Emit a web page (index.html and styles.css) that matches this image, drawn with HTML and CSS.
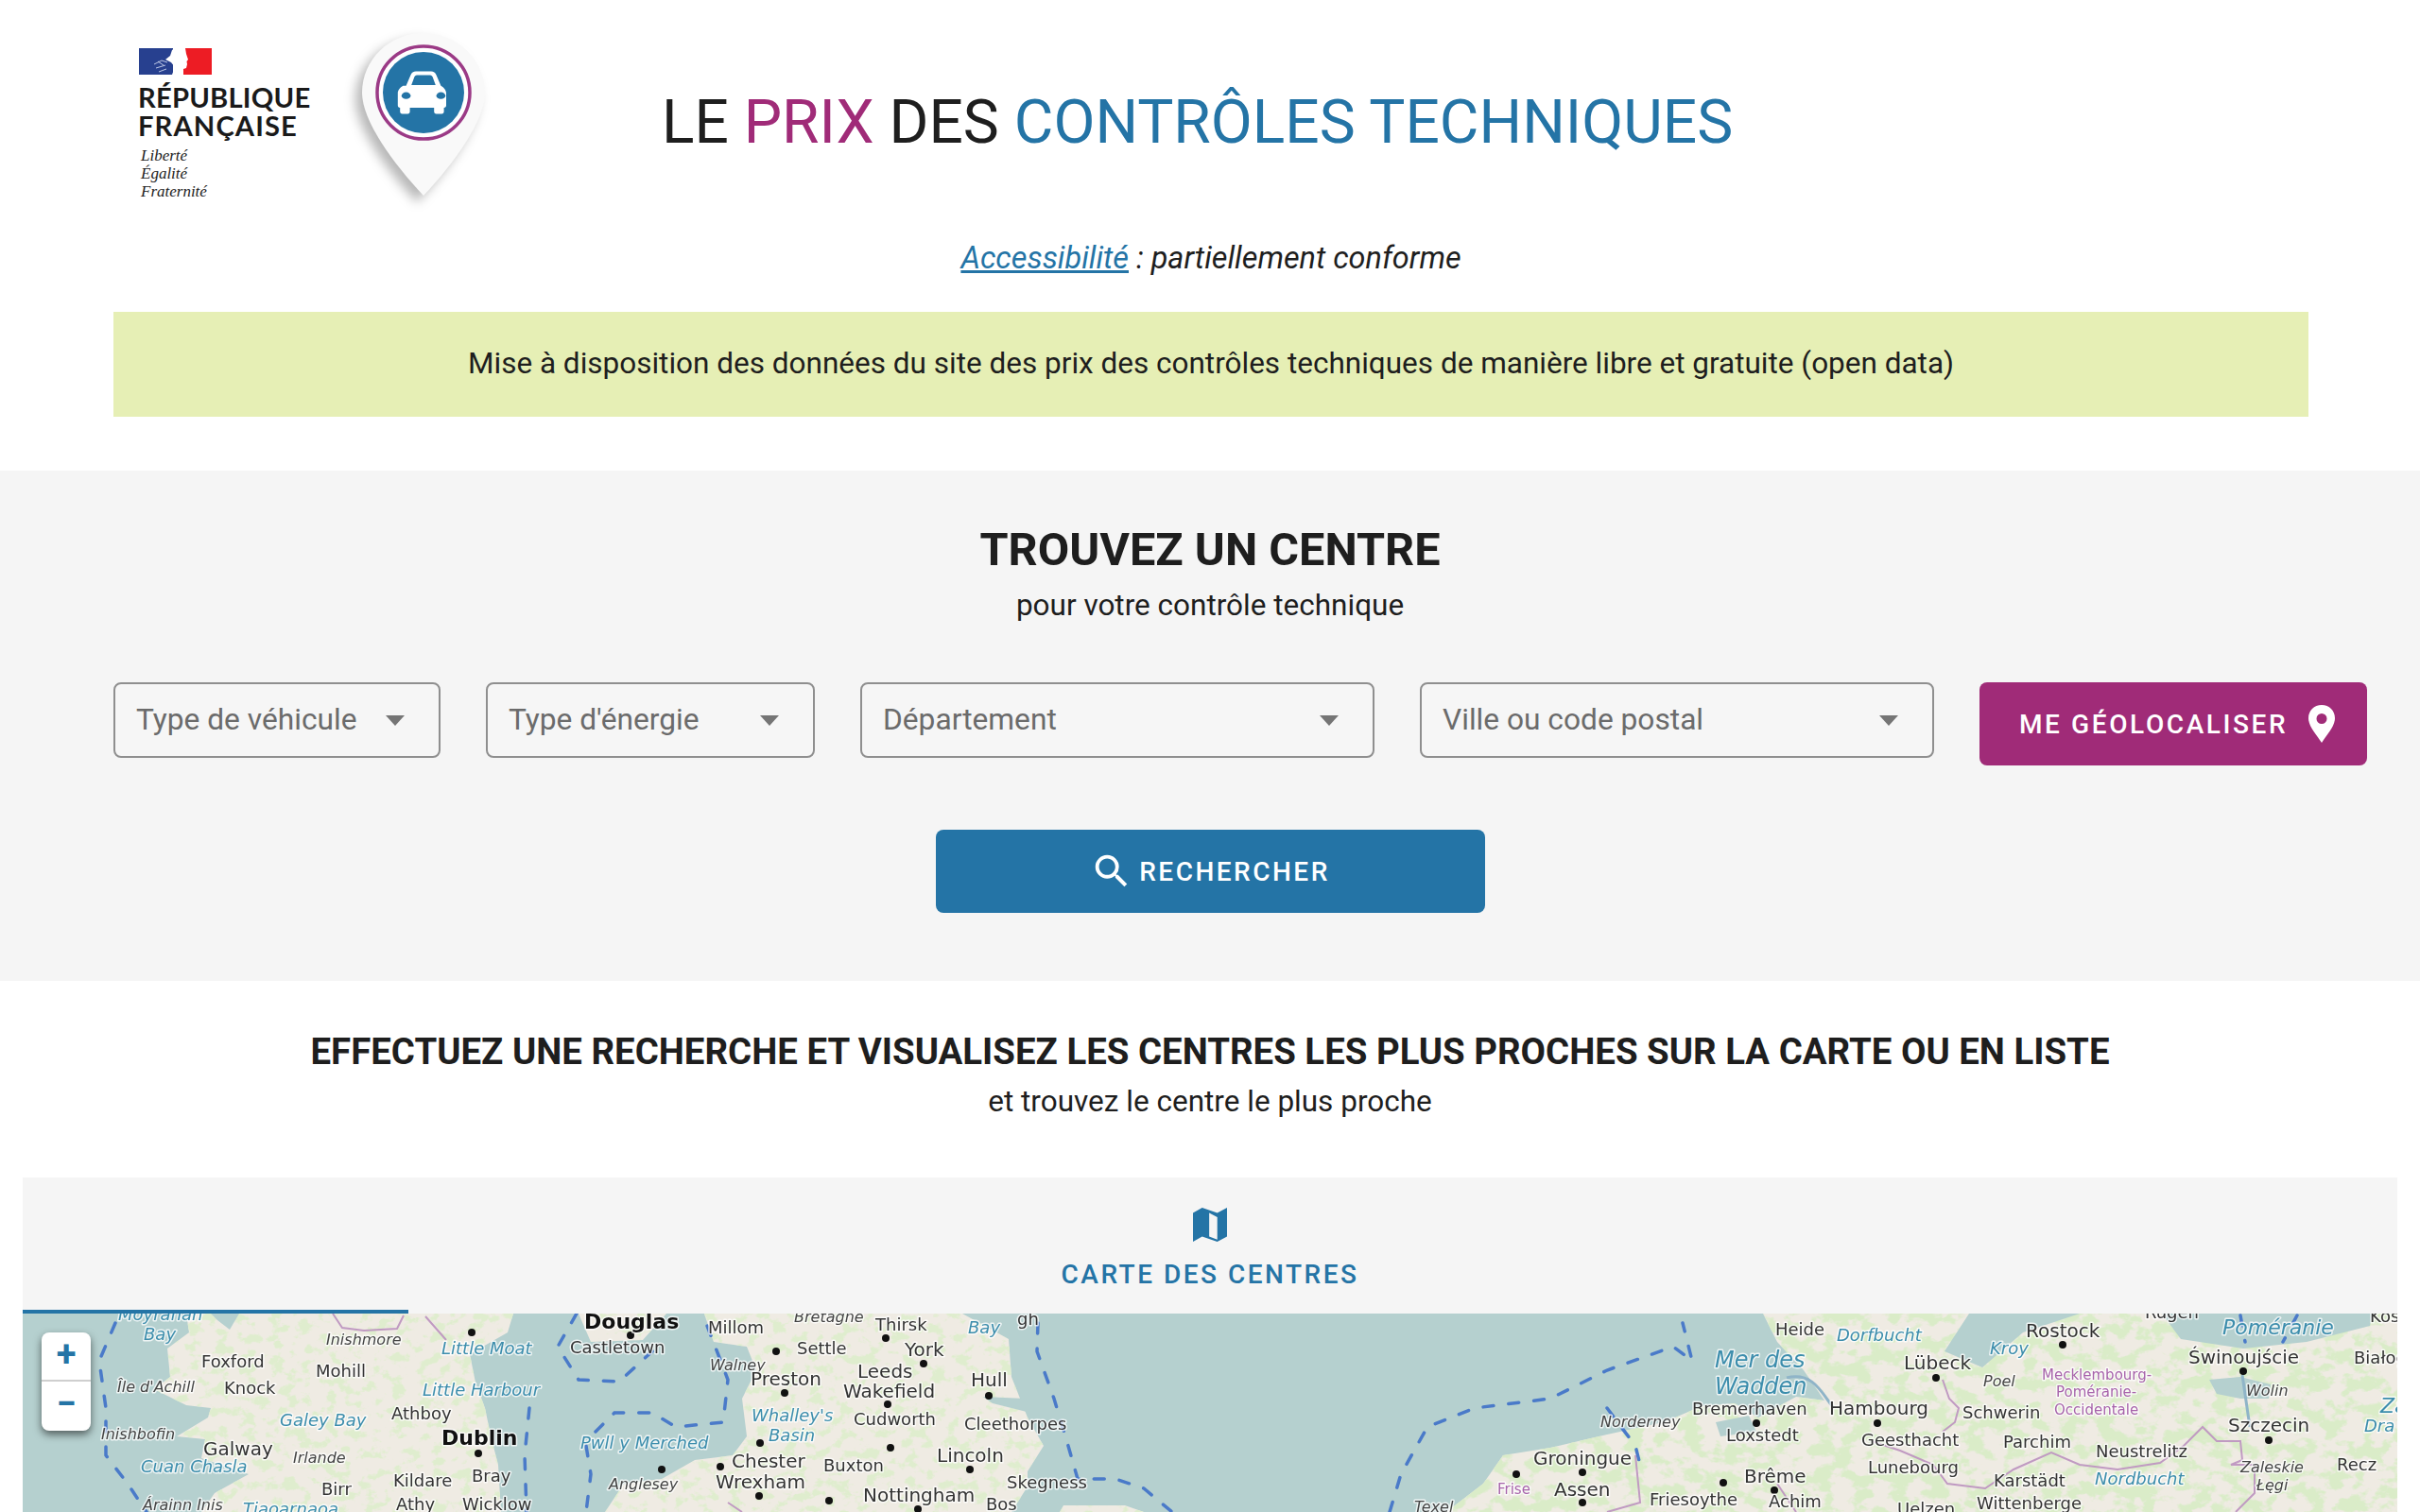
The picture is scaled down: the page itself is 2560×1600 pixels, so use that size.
FILE: index.html
```html
<!DOCTYPE html>
<html lang="fr">
<head>
<meta charset="utf-8">
<title>Le prix des contrôles techniques</title>
<link rel="stylesheet" href="styles.css">
</head>
<body>
<header class="top">
  <div class="brand">
    <div class="marianne">
      <svg class="flag" viewBox="0 0 77 28" aria-hidden="true">
        <rect width="36" height="28" fill="#27408f"/>
        <rect x="47" width="30" height="28" fill="#ed1c24"/>
        <path d="M38 0h11l1 6 2 6-1.500 2 .5 3-1 4-3 1-2 6H35l3-8-4-5-6-3 5-4 2-6z" fill="#fff"/>
        <path d="M16 17l8-4 6 2M18 21l10-3M21 25l8-3M20 14l6 4" fill="none" stroke="#cdd6ee" stroke-width=".9"/>
      </svg>
      <p class="rf">RÉPUBLIQUE<br><span class="rf-wide">FRANÇAISE</span></p>
      <p class="devise">Liberté<br>Égalité<br>Fraternité</p>
    </div>
    <svg class="pin" viewBox="0 0 150 200" aria-hidden="true">
      <path d="M78 14c36 0 65 28 65 63 0 30-33 75-65 109C46 152 13 107 13 77c0-35 29-63 65-63z" fill="#f9f9f9"/>
      <circle cx="78" cy="77" r="49" fill="#fff" stroke="#9b3a86" stroke-width="3.500"/>
      <circle cx="78" cy="77" r="43" fill="#2474a6"/>
      <g transform="translate(78 77) scale(.8) translate(-78 -72)">
        <path d="M55 63l6-14c1-3 4-5 7-5h20c3 0 6 2 7 5l6 14c4 2 7 6 7 10v16c0 2-1 3-3 3v5c0 2-1 3-3 3h-7c-2 0-3-1-3-3v-5H60v5c0 2-1 3-3 3h-7c-2 0-3-1-3-3v-5c-2 0-3-1-3-3V73c0-4 3-8 7-10z" fill="#fff"/>
        <path d="M62 62l4-11c1-1 2-2 3-2h18c1 0 2 1 3 2l4 11z" fill="#2474a6"/>
        <ellipse cx="55" cy="76" rx="6" ry="4.500" fill="#2474a6"/>
        <ellipse cx="101" cy="76" rx="6" ry="4.500" fill="#2474a6"/>
      </g>
    </svg>
  </div>
  <h1 class="title">LE <span class="purple">PRIX</span> DES <span class="blue">CONTRÔLES TECHNIQUES</span></h1>
</header>

<p class="access"><a href="#">Accessibilité</a> : partiellement conforme</p>

<div class="banner">Mise à disposition des données du site des prix des contrôles techniques de manière libre et gratuite (open data)</div>

<section class="search">
  <h2 class="search-title">TROUVEZ UN CENTRE</h2>
  <p class="search-sub">pour votre contrôle technique</p>
  <div class="filters">
    <div class="select">Type de véhicule<i class="caret"></i></div>
    <div class="select">Type d'énergie<i class="caret"></i></div>
    <div class="select">Département<i class="caret"></i></div>
    <div class="select">Ville ou code postal<i class="caret"></i></div>
    <button class="btn btn-geo">ME GÉOLOCALISER
      <svg class="geo-icon" viewBox="0 0 28 40" aria-hidden="true"><path fill-rule="evenodd" d="M14 0C6 0 0 6 0 14c0 9 9 18 14 26 5-8 14-17 14-26C28 6 22 0 14 0zm0 9a5.500 5.500 0 1 1 0 11 5.500 5.500 0 0 1 0-11z" fill="#fff"/></svg>
    </button>
  </div>
  <div class="search-action">
    <button class="btn btn-search">
      <svg class="search-icon" viewBox="0 0 24 24" aria-hidden="true"><path d="M15.500 14h-.79l-.28-.27A6.470 6.470 0 0 0 16 9.500 6.500 6.500 0 1 0 9.500 16c1.610 0 3.090-.59 4.230-1.570l.27.28v.79l5 4.990L20.490 19l-4.990-5zm-6 0C7.010 14 5 11.990 5 9.500S7.010 5 9.500 5 14 7.010 14 9.500 11.990 14 9.500 14z" fill="#fff"/></svg>
      RECHERCHER
    </button>
  </div>
</section>

<section class="intro">
  <h2 class="intro-title">EFFECTUEZ UNE RECHERCHE ET VISUALISEZ LES CENTRES LES PLUS PROCHES SUR LA CARTE OU EN LISTE</h2>
  <p class="intro-sub">et trouvez le centre le plus proche</p>
</section>

<section class="panel">
  <div class="tab">
    <svg class="map-icon" viewBox="0 0 63 109" preserveAspectRatio="none" aria-hidden="true"><path fill-rule="evenodd" d="M0 17L17 0l28 17L63 0v92l-18 17-28-17L0 109zM30 17v75l15 10V30z" fill="#2474a6"/></svg>
    <span class="tab-label">CARTE DES CENTRES</span>
    <i class="tab-line"></i>
  </div>
  <div class="map">
    <svg class="map-svg" viewBox="24 1390 2512 210" preserveAspectRatio="none" aria-label="Carte">
      <defs>
        <filter id="mottle-pale" x="0" y="0" width="100%" height="100%">
          <feTurbulence type="fractalNoise" baseFrequency="0.07 0.09" numOctaves="4" seed="7"/>
          <feColorMatrix type="matrix" values="0 0 0 0 0.74  0 0 0 0 0.85  0 0 0 0 0.62  0 0 0 8 -4.200"/>
        </filter>
        <filter id="mottle-green" x="0" y="0" width="100%" height="100%">
          <feTurbulence type="fractalNoise" baseFrequency="0.05 0.07" numOctaves="4" seed="3"/>
          <feColorMatrix type="matrix" values="0 0 0 0 0.70  0 0 0 0 0.84  0 0 0 0 0.58  0 0 0 8 -3.700"/>
        </filter>
        <clipPath id="land">
          <path d="M197 1390L200 1410 177 1427 180 1457 163 1470 197 1487 223 1490 220 1500 187 1520 217 1523 213 1543 263 1560 227 1580 213 1600H530L527 1550 520 1523 513 1490 503 1463 497 1433 537 1410 543 1390z"/>
          <path d="M612 1390L625 1420 680 1418 705 1390z"/>
          <path d="M745 1390L755 1420 790 1425 800 1450 785 1480 790 1520 775 1540 735 1545 700 1565 660 1570 640 1600H1070L1087 1573 1087 1557 1104 1530 1087 1500 1070 1457 1067 1417 1018 1390z"/>
          <path d="M1121 1600L1125 1593 1190 1593 1210 1600z"/>
          <path d="M1530 1600L1569 1570 1590 1540 1640 1532 1700 1518 1760 1505 1800 1488 1835 1485 1860 1500 1900 1478 1930 1482 1908 1450 1880 1420 1865 1390H2560V1600z"/>
        </clipPath>
      </defs>
      <rect x="24" y="1390" width="2512" height="210" fill="#b5d0cf"/>
      <g clip-path="url(#land)">
        <rect x="24" y="1390" width="2512" height="210" fill="#efebe3"/>
        <rect x="24" y="1390" width="1260" height="210" filter="url(#mottle-pale)"/>
        <rect x="1500" y="1390" width="1036" height="210" filter="url(#mottle-green)"/>
      </g>
      <g fill="#b5d0cf">
        <path d="M223 1390H253L243 1407 230 1397z"/>
        <path d="M2083 1390H2200L2140 1410 2097 1447 2057 1430z"/>
        <path d="M2287 1390H2510L2507 1403 2440 1420 2373 1427 2307 1417z"/>
        <path d="M2337 1460L2370 1457 2402 1465 2400 1480 2370 1480 2345 1475z"/>
        <path d="M1040 1478L1085 1480 1090 1495 1050 1485z"/>
        <path d="M1670 1390h30v7h-30z" opacity=".6"/>
        <path d="M1815 1505L1850 1498 1858 1515 1820 1520z"/>
      </g>
      <g class="sea-border">
        <path d="M122 1400L105 1440 112 1490 112 1540 135 1570 155 1600"/>
        <path d="M560 1490L555 1540 557 1600"/>
        <path d="M610 1390L590 1425 612 1460 655 1462 690 1430"/>
        <path d="M630 1515L650 1495 690 1495 715 1510 765 1505 770 1460 745 1395"/>
        <path d="M620 1530L625 1560 620 1600"/>
        <path d="M1098 1400L1097 1430 1115 1480 1130 1530 1140 1565 1180 1565 1210 1575 1240 1600"/>
        <path d="M1470 1600L1482 1560 1510 1510 1560 1490 1640 1480 1700 1450 1770 1425 1790 1440 1780 1400"/>
        <path d="M1700 1490L1730 1530 1735 1550"/>
        <path d="M2370 1392L2375 1420M2430 1392L2415 1420"/>
      </g>
      <g class="land-border">
        <path d="M352 1390L362 1405 385 1408 420 1406 427 1392M450 1393L465 1410 472 1418"/>
        <path d="M2055 1460L2062 1480 2072 1490 2068 1505 2055 1515M1980 1525L2010 1535 2045 1550 2060 1570 2100 1575 2130 1555 2170 1537 2200 1550 2240 1555 2285 1548 2310 1530 2330 1510 2345 1525 2370 1525 2372 1545 2360 1550 2385 1550 2385 1580 2365 1600"/>
        <path d="M1730 1540L1735 1590 1700 1600M1880 1570L1900 1600M770 1590L785 1600"/>
      </g>
      <path class="river" d="M1890 1458C1920 1450 1930 1480 1940 1490M2372 1455L2380 1510"/>
      <g class="dots">
        <circle cx="937" cy="1416" r="4"/><circle cx="821" cy="1430" r="4"/><circle cx="977" cy="1443" r="4"/><circle cx="830" cy="1474" r="4"/><circle cx="1046" cy="1477" r="4"/><circle cx="939" cy="1486" r="4"/><circle cx="804" cy="1527" r="4"/><circle cx="942" cy="1532" r="4"/><circle cx="1026" cy="1555" r="4"/><circle cx="803" cy="1583" r="4"/><circle cx="877" cy="1588" r="4"/><circle cx="971" cy="1597" r="4"/><circle cx="1604" cy="1560" r="4"/><circle cx="1674" cy="1558" r="4"/><circle cx="1674" cy="1590" r="4"/><circle cx="499" cy="1410" r="4"/><circle cx="667" cy="1413" r="4"/><circle cx="506" cy="1538" r="4"/><circle cx="700" cy="1555" r="4"/><circle cx="762" cy="1552" r="4"/><circle cx="2182" cy="1423" r="4"/><circle cx="2048" cy="1458" r="4"/><circle cx="2373" cy="1451" r="4"/><circle cx="1858" cy="1506" r="4"/><circle cx="1986" cy="1506" r="4"/><circle cx="2400" cy="1524" r="4"/><circle cx="1823" cy="1569" r="4"/><circle cx="1877" cy="1577" r="4"/>
      </g>
      <g class="labels">
        <text class="w" x="125" y="1397">Moyranan</text><text class="w" x="152" y="1418">Bay</text>
        <text class="c" x="213" y="1447">Foxford</text><text class="c" x="334" y="1457">Mohill</text>
        <text class="i" x="345" y="1423">Inishmore</text><text class="w" x="467" y="1433">Little Moat</text>
        <text class="b" x="618" y="1406">Douglas</text><text class="c" x="603" y="1432">Castletown</text>
        <text class="c" x="749" y="1411">Millom</text><text class="i" x="751" y="1450">Walney</text>
        <text class="i" x="124" y="1473">Île d'Achill</text><text class="c" x="237" y="1475">Knock</text>
        <text class="w" x="447" y="1477">Little Harbour</text><text class="w" x="296" y="1509">Galey Bay</text>
        <text class="c" x="414" y="1502">Athboy</text><text class="i" x="107" y="1523">Inishbofin</text>
        <text class="b" x="467" y="1529">Dublin</text><text class="c2" x="215" y="1540">Galway</text>
        <text class="i" x="310" y="1548">Irlande</text><text class="w" x="149" y="1558">Cuan Chasla</text>
        <text class="c" x="499" y="1568">Bray</text><text class="c" x="416" y="1573">Kildare</text>
        <text class="c" x="340" y="1582">Birr</text><text class="c" x="419" y="1598">Athy</text>
        <text class="c" x="489" y="1598">Wicklow</text><text class="i" x="151" y="1598">Árainn Inis</text>
        <text class="w" x="257" y="1603">Tiaoarnaoa</text><text class="w" x="614" y="1533">Pwll y Merched</text>
        <text class="i" x="644" y="1576">Anglesey</text><text class="c2" x="774" y="1553">Chester</text>
        <text class="c2" x="757" y="1575">Wrexham</text><text class="c2" x="794" y="1466">Preston</text>
        <text class="i" x="840" y="1399">Bretagne</text><text class="c" x="926" y="1408">Thirsk</text>
        <text class="w" x="1024" y="1411">Bay</text><text class="c" x="1076" y="1402">gh</text>
        <text class="c" x="843" y="1433">Settle</text><text class="c2" x="957" y="1435">York</text>
        <text class="c2" x="907" y="1458">Leeds</text><text class="c2" x="892" y="1479">Wakefield</text>
        <text class="c2" x="1027" y="1467">Hull</text><text class="w" x="795" y="1504">Whalley's</text>
        <text class="w" x="813" y="1525">Basin</text><text class="c" x="903" y="1508">Cudworth</text>
        <text class="c" x="1020" y="1513">Cleethorpes</text><text class="c" x="871" y="1557">Buxton</text>
        <text class="c2" x="991" y="1547">Lincoln</text><text class="c" x="1065" y="1575">Skegness</text>
        <text class="c2" x="913" y="1589">Nottingham</text><text class="c" x="1043" y="1598">Bos</text>
        <text class="i" x="1496" y="1600">Texel</text><text class="c2" x="1622" y="1550">Groningue</text>
        <text class="r" x="1584" y="1581">Frise</text><text class="c2" x="1644" y="1583">Assen</text>
        <text class="c" x="1878" y="1413">Heide</text><text class="w" x="1943" y="1419">Dorfbucht</text>
        <text class="c2" x="2143" y="1415">Rostock</text><text class="w" x="2105" y="1433">Kroy</text>
        <text class="w big" x="2351" y="1412">Poméranie</text><text class="c" x="2507" y="1399">Kos</text>
        <text class="c" x="2269" y="1395">Rügen</text><text class="c2" x="2014" y="1449">Lübeck</text>
        <text class="c2" x="2315" y="1443">Świnoujście</text><text class="c" x="2490" y="1443">Białogard</text>
        <text class="w huge" x="1814" y="1447">Mer des</text><text class="w huge" x="1814" y="1475">Wadden</text>
        <text class="i" x="2098" y="1467">Poel</text><text class="r" x="2160" y="1460">Mecklembourg-</text>
        <text class="r" x="2175" y="1478">Poméranie-</text><text class="r" x="2173" y="1497">Occidentale</text>
        <text class="i" x="2376" y="1477">Wolin</text><text class="i" x="1693" y="1510">Norderney</text>
        <text class="c" x="1790" y="1497">Bremerhaven</text><text class="c2" x="1935" y="1497">Hambourg</text>
        <text class="c" x="2076" y="1501">Schwerin</text><text class="c" x="1826" y="1525">Loxstedt</text>
        <text class="c" x="1969" y="1530">Geesthacht</text><text class="c" x="2119" y="1532">Parchim</text>
        <text class="c2" x="2357" y="1515">Szczecin</text><text class="w big" x="2518" y="1495">Za</text>
        <text class="w" x="2501" y="1515">Dra</text><text class="c" x="2217" y="1542">Neustrelitz</text>
        <text class="c" x="1976" y="1559">Lunebourg</text><text class="i" x="2370" y="1558">Zaleskie</text>
        <text class="i" x="2387" y="1577">Łęgi</text><text class="c" x="2472" y="1556">Recz</text>
        <text class="c" x="2109" y="1573">Karstädt</text><text class="w" x="2216" y="1571">Nordbucht</text>
        <text class="c2" x="1845" y="1569">Brême</text><text class="c" x="1745" y="1593">Friesoythe</text>
        <text class="c" x="1871" y="1595">Achim</text><text class="c" x="2007" y="1603">Uelzen</text>
        <text class="c" x="2091" y="1597">Wittenberge</text>
      </g>
    </svg>
    <div class="zoom">
      <span class="zoom-btn">+</span>
      <span class="zoom-btn">−</span>
    </div>
  </div>
</section>
</body>
</html>
```

FILE: styles.css
```css
* { box-sizing: border-box; }
html, body { margin: 0; height: 1600px; overflow: hidden; }
body { background: #fff; color: #1e1e1e; font-family: Roboto, "Liberation Sans", sans-serif; }
p, h1, h2 { margin: 0; }

.top { display: flex; align-items: flex-start; height: 250px; padding-left: 146px; }
.brand { display: flex; width: 554px; padding-top: 51px; position: relative; }
.marianne { width: 224px; }
.flag { display: block; width: 77px; height: 28px; margin-left: 1px; }
.rf { font-family: Lato, "Noto Sans", sans-serif; font-weight: 700; font-size: 29.200px; line-height: 30px; margin-top: 9px; letter-spacing: .2px; color: #1a1a1a; }
.rf-wide { letter-spacing: 1.100px; }
.devise { font-family: "Liberation Serif", serif; font-style: italic; font-size: 17px; line-height: 19px; margin-top: 7px; padding-left: 3px; color: #222; }
.pin { width: 150px; height: 200px; margin-top: -30px; filter: drop-shadow(-7px 7px 6px rgba(0,0,0,.28)); }
.title { font-weight: 400; font-size: 64px; line-height: 76px; margin-top: 92px; white-space: nowrap; }
.purple { color: #a02b78; }
.blue { color: #2474a6; }

.access { text-align: center; font-style: italic; font-size: 32.400px; line-height: 46px; margin-bottom: 34px; padding-left: 2px; }
.access a { color: #2474a6; }

.banner { margin: 0 118px 57px 120px; height: 111px; padding-bottom: 2px; background: #e6efb5; display: flex; align-items: center; justify-content: center; font-size: 31.500px; }

.search { background: #f5f5f5; height: 540px; padding-top: 55px; text-align: center; }
.search-title { font-size: 48.600px; font-weight: 700; line-height: 58px; }
.search-sub { font-size: 31.500px; line-height: 40px; margin-top: 10px; }
.filters { display: grid; grid-template-columns: 346px 348px 544px 544px 410px; column-gap: 48px; padding-left: 120px; margin-top: 61px; align-items: start; text-align: left; }
.select { height: 80px; border: 2px solid #8f8f8f; border-radius: 8px; background: #f6f6f6; color: #6b6b6b; font-size: 31.700px; line-height: 75px; padding: 0 36px 0 22px; display: flex; justify-content: space-between; align-items: flex-start; }
.caret { width: 0; height: 0; margin-top: 33px; border-left: 10px solid transparent; border-right: 10px solid transparent; border-top: 11px solid #757575; }
.btn { border: 0; border-radius: 8px; color: #fff; font-family: inherit; font-weight: 500; display: flex; align-items: center; justify-content: center; }
.btn-geo { height: 88px; background: #a02b78; font-size: 28px; letter-spacing: 2.600px; gap: 22px; padding: 0 0 0 42px; justify-content: flex-start; }
.geo-icon { width: 28px; height: 40px; }
.search-action { display: flex; justify-content: center; margin-top: 68px; }
.btn-search { width: 581px; height: 88px; background: #2474a6; font-size: 28px; letter-spacing: 2.500px; gap: 6px; }
.search-icon { width: 46px; height: 46px; }

.intro { text-align: center; padding-top: 50px; height: 208px; }
.intro-title { font-size: 38.400px; font-weight: 700; line-height: 50px; white-space: nowrap; }
.intro-sub { font-size: 31.500px; line-height: 40px; margin-top: 8px; }

.panel { margin: 0 24px; }
.tab { height: 144px; background: #f5f5f5; position: relative; display: flex; flex-direction: column; align-items: center; padding-top: 32px; }
.map-icon { width: 36px; height: 36px; }
.tab-label { color: #2474a6; font-size: 28px; font-weight: 500; letter-spacing: 2.500px; line-height: 34px; margin-top: 18px; }
.tab-line { position: absolute; left: 0; bottom: 0; width: 408px; height: 4px; background: #2474a6; }

.map { position: relative; height: 210px; overflow: hidden; }
.map-svg { display: block; width: 100%; height: 210px; filter: blur(.5px); }
.sea-border { fill: none; stroke: #4a7ac9; stroke-width: 3.500; stroke-dasharray: 11 16; stroke-linecap: round; }
.land-border { fill: none; stroke: #c09ac2; stroke-width: 2; }
.river { fill: none; stroke: #8fb4c8; stroke-width: 3; }
.dots { fill: #111; }
.labels { font-family: "DejaVu Sans", sans-serif; font-size: 18px; paint-order: stroke; stroke: rgba(255,255,255,.75); stroke-width: 3px; stroke-linejoin: round; }
.labels .c { fill: #333; }
.labels .c2 { fill: #333; font-size: 20px; }
.labels .b { fill: #111; font-weight: 700; font-size: 22px; }
.labels .i { fill: #444; font-style: italic; font-size: 16px; }
.labels .w { fill: #3c8dac; font-style: italic; font-size: 18px; }
.labels .r { fill: #a763ab; font-size: 15px; }
.labels .big { font-size: 22px; }
.labels .huge { font-size: 24px; }

.zoom { position: absolute; left: 20px; top: 20px; width: 52px; height: 104px; background: #fff; border-radius: 8px; box-shadow: 0 4px 8px rgba(0,0,0,.55); display: flex; flex-direction: column; }
.zoom-btn { height: 52px; color: #2474a6; font-size: 38px; font-weight: 700; line-height: 47px; text-align: center; }
.zoom-btn:first-child { border-bottom: 2px solid #cfcfcf; }
```
